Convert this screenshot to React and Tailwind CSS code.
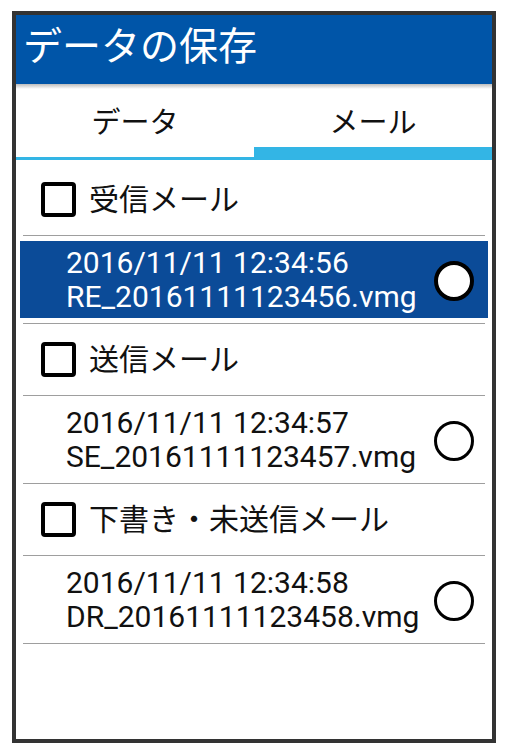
import React from "react";

const font = { fontFamily: 'Roboto, "Noto Sans CJK JP", sans-serif' };

const sections = [
  { title: "受信メール", date: "2016/11/11 12:34:56", file: "RE_20161111123456.vmg", selected: true },
  { title: "送信メール", date: "2016/11/11 12:34:57", file: "SE_20161111123457.vmg", selected: false },
  { title: "下書き・未送信メール", date: "2016/11/11 12:34:58", file: "DR_20161111123458.vmg", selected: false },
];

function Separator() {
  return <div className="mx-[7px] h-px bg-[#9e9e9e]" />;
}

function SectionHeader({ title }) {
  return (
    <div className="h-[71px] flex items-center pl-[25px]">
      <div className="w-[35px] h-[35px] border-[4px] border-black rounded-[4px] shrink-0" />
      <span className="ml-[13px] text-[30px] leading-none text-[#111]">{title}</span>
    </div>
  );
}

function FileRow({ date, file, selected }) {
  return (
    <div className="h-[87px] px-[4px] py-[5px]">
      <div
        className={
          selected
            ? "h-full flex items-center bg-[#0b4b98] text-white"
            : "h-full flex items-center text-[#111]"
        }
      >
        <div className="flex-1 pl-[46px] text-[30px] leading-[34px]">
          <div>{date}</div>
          <div>{file}</div>
        </div>
        <div
          className={
            selected
              ? "w-[40px] h-[40px] rounded-full border-[4px] border-black bg-white mr-[14px] mt-[2px]"
              : "w-[40px] h-[40px] rounded-full border-[3px] border-black mr-[14px] mt-[2px]"
          }
        />
      </div>
    </div>
  );
}

export default function App() {
  return (
    <div className="w-[507px] h-[753px] bg-white pl-[12px] pr-[11px] pt-[11px] pb-[10px]" style={font}>
      <div className="h-full border-[4px] border-[#333333] flex flex-col bg-white overflow-hidden">
        <div className="relative h-[69px] bg-[#0055a8] flex items-center pl-[7px] shrink-0">
          <span className="text-white text-[39px] leading-none -mt-[4px]">データの保存</span>
          <div className="absolute left-0 right-0 top-full h-[5px] bg-gradient-to-b from-[#bdbdbd] to-white" />
        </div>

        <div className="flex h-[76px] shrink-0">
          <div className="flex-1 flex flex-col">
            <div className="flex-1 flex items-center justify-center pt-[6px]">
              <span className="text-[29px] leading-none text-[#111]">データ</span>
            </div>
            <div className="h-[3px] bg-[#33b5e5]" />
          </div>
          <div className="flex-1 flex flex-col">
            <div className="flex-1 flex items-center justify-center pt-[16px]">
              <span className="text-[29px] leading-none text-[#111]">メール</span>
            </div>
            <div className="h-[13px] bg-[#33b5e5]" />
          </div>
        </div>

        <div className="pt-[4px]">
          {sections.map((s) => (
            <div key={s.file}>
              <SectionHeader title={s.title} />
              <Separator />
              <FileRow date={s.date} file={s.file} selected={s.selected} />
              <Separator />
            </div>
          ))}
        </div>
      </div>
    </div>
  );
}
